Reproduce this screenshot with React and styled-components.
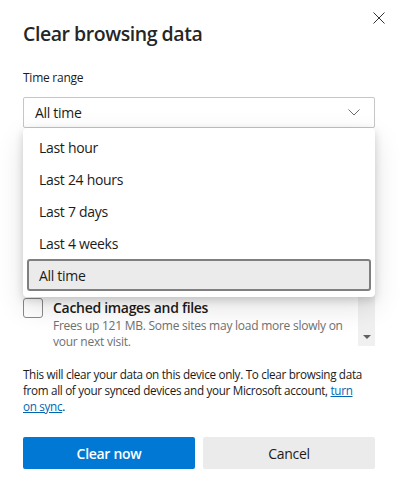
import React, { useState } from 'react';
import styled, { createGlobalStyle } from 'styled-components';

const GlobalStyle = createGlobalStyle`
  html, body {
    margin: 0;
    padding: 0;
    background: #ffffff;
  }
  * {
    box-sizing: border-box;
  }
`;

const FONT = `'Segoe UI', 'Open Sans', 'Noto Sans', sans-serif`;

const Dialog = styled.div`
  position: relative;
  width: 399px;
  height: 492px;
  padding: 20px 24px 0 23px;
  background: #ffffff;
  font-family: ${FONT};
  color: #1b1b1b;
  overflow: hidden;
`;

const CloseButton = styled.button`
  position: absolute;
  top: 12px;
  right: 14px;
  width: 12px;
  height: 12px;
  padding: 0;
  border: none;
  background: transparent;
  cursor: pointer;
  display: flex;

  svg {
    width: 12px;
    height: 12px;
  }
`;

const Title = styled.h1`
  margin: 0;
  font-size: 19.5px;
  line-height: 28px;
  font-weight: 600;
  letter-spacing: -0.45px;
  color: #262626;
`;

const Label = styled.div`
  margin-top: 22px;
  font-size: 12px;
  line-height: 16px;
  letter-spacing: -0.25px;
  color: #1b1b1b;
`;

const SelectWrap = styled.div`
  position: relative;
  margin-top: 11px;
`;

const Select = styled.div`
  height: 31px;
  border: 1px solid #c6c6c6;
  border-radius: 2px;
  display: flex;
  align-items: center;
  justify-content: space-between;
  padding: 0 14px 0 11px;
  font-size: 14px;
  letter-spacing: -0.3px;
  color: #1b1b1b;
`;

const Menu = styled.ul`
  position: absolute;
  top: 31px;
  left: 0;
  right: 0;
  margin: 0;
  padding: 3px 4px 6px;
  list-style: none;
  background: #ffffff;
  border-radius: 4px;
  box-shadow: 0 3px 8px rgba(0, 0, 0, 0.16), 0 10px 28px rgba(0, 0, 0, 0.12);
  z-index: 2;
`;

const MenuItem = styled.li`
  height: 32px;
  display: flex;
  align-items: center;
  padding-left: ${({ selected }) => (selected ? '10px' : '12px')};
  font-size: 14px;
  letter-spacing: -0.3px;
  color: #1b1b1b;
  border-radius: 3px;
  background: ${({ selected }) => (selected ? '#ebebeb' : 'transparent')};
  border: ${({ selected }) => (selected ? '2px solid #7f7f7f' : 'none')};
  cursor: default;
`;

const List = styled.div`
  margin-top: 12px;
  height: 206px;
  display: flex;
  overflow: hidden;
`;

const Items = styled.div`
  flex: 1;
  display: flex;
  flex-direction: column;
  justify-content: flex-end;
  gap: 12px;
`;

const Item = styled.div`
  display: flex;
  gap: 10px;
  flex-shrink: 0;
  margin-bottom: ${({ clip }) => (clip ? '-4px' : '0')};
`;

const Checkbox = styled.span`
  flex-shrink: 0;
  width: 20px;
  height: 20px;
  border: 1px solid #8a8a8a;
  border-radius: 3px;
  background: #ffffff;
`;

const ItemText = styled.div`
  display: flex;
  flex-direction: column;
  padding-right: 14px;
`;

const ItemTitle = styled.div`
  font-size: 14px;
  line-height: 20px;
  font-weight: 600;
  letter-spacing: -0.3px;
  color: #1b1b1b;
`;

const ItemDesc = styled.div`
  font-size: 12px;
  line-height: 16px;
  letter-spacing: -0.25px;
  color: #707070;
`;

const Scrollbar = styled.div`
  width: 17px;
  flex-shrink: 0;
  background: #f0f0f0;
  display: flex;
  flex-direction: column;
  justify-content: flex-end;
  align-items: center;
  padding-bottom: 7px;
`;

const ArrowDown = styled.span`
  width: 0;
  height: 0;
  border-left: 4px solid transparent;
  border-right: 4px solid transparent;
  border-top: 4px solid #606060;
`;

const Info = styled.p`
  margin: 20px 0 0;
  font-size: 11.7px;
  line-height: 16px;
  letter-spacing: -0.32px;
  color: #1b1b1b;

  a {
    color: #0066b4;
    text-decoration: underline;
  }
`;

const Buttons = styled.div`
  margin-top: 23px;
  display: grid;
  grid-template-columns: 1fr 1fr;
  gap: 8px;
`;

const Button = styled.button`
  height: 32px;
  border: none;
  border-radius: 2px;
  font-family: ${FONT};
  font-size: 14px;
  letter-spacing: -0.3px;
  font-weight: ${({ primary }) => (primary ? 600 : 400)};
  color: ${({ primary }) => (primary ? '#ffffff' : '#1b1b1b')};
  background: ${({ primary }) => (primary ? '#0078d4' : '#ebebeb')};
  cursor: pointer;
`;

const ranges = ['Last hour', 'Last 24 hours', 'Last 7 days', 'Last 4 weeks', 'All time'];

const dataTypes = [
  { title: 'Browsing history', desc: '1,204 items. Includes autocompletions in the address bar.' },
  { title: 'Download history', desc: '32 items' },
  { title: 'Cookies and other site data', desc: 'From 148 sites. Signs you out of most sites.' },
  { title: 'Cached images and files', desc: 'Frees up 121 MB. Some sites may load more slowly on your next visit.' },
];

const App = () => {
  const [range] = useState('All time');

  return (
    <>
      <GlobalStyle />
      <Dialog>
        <CloseButton aria-label="Close">
          <svg viewBox="0 0 12 12" fill="none" stroke="#333" strokeWidth="1">
            <path d="M0.5 0.5L11.5 11.5M11.5 0.5L0.5 11.5" />
          </svg>
        </CloseButton>
        <Title>Clear browsing data</Title>
        <Label>Time range</Label>
        <SelectWrap>
          <Select>
            <span>{range}</span>
            <svg width="12" height="7" viewBox="0 0 12 7" fill="none" stroke="#6b6b6b" strokeWidth="1">
              <path d="M0.5 0.5L6 6L11.5 0.5" />
            </svg>
          </Select>
          <Menu>
            {ranges.map((r) => (
              <MenuItem key={r} selected={r === range}>
                {r}
              </MenuItem>
            ))}
          </Menu>
          <List>
            <Items>
              {dataTypes.map((d, i) => (
                <Item key={d.title} clip={i === dataTypes.length - 1}>
                  <Checkbox />
                  <ItemText>
                    <ItemTitle>{d.title}</ItemTitle>
                    <ItemDesc>{d.desc}</ItemDesc>
                  </ItemText>
                </Item>
              ))}
            </Items>
            <Scrollbar>
              <ArrowDown />
            </Scrollbar>
          </List>
        </SelectWrap>
        <Info>
          This will clear your data on this device only. To clear browsing data from all of your
          synced devices and your Microsoft account, <a href="#sync">turn<br />on sync</a>.
        </Info>
        <Buttons>
          <Button primary>Clear now</Button>
          <Button>Cancel</Button>
        </Buttons>
      </Dialog>
    </>
  );
};

export default App;
